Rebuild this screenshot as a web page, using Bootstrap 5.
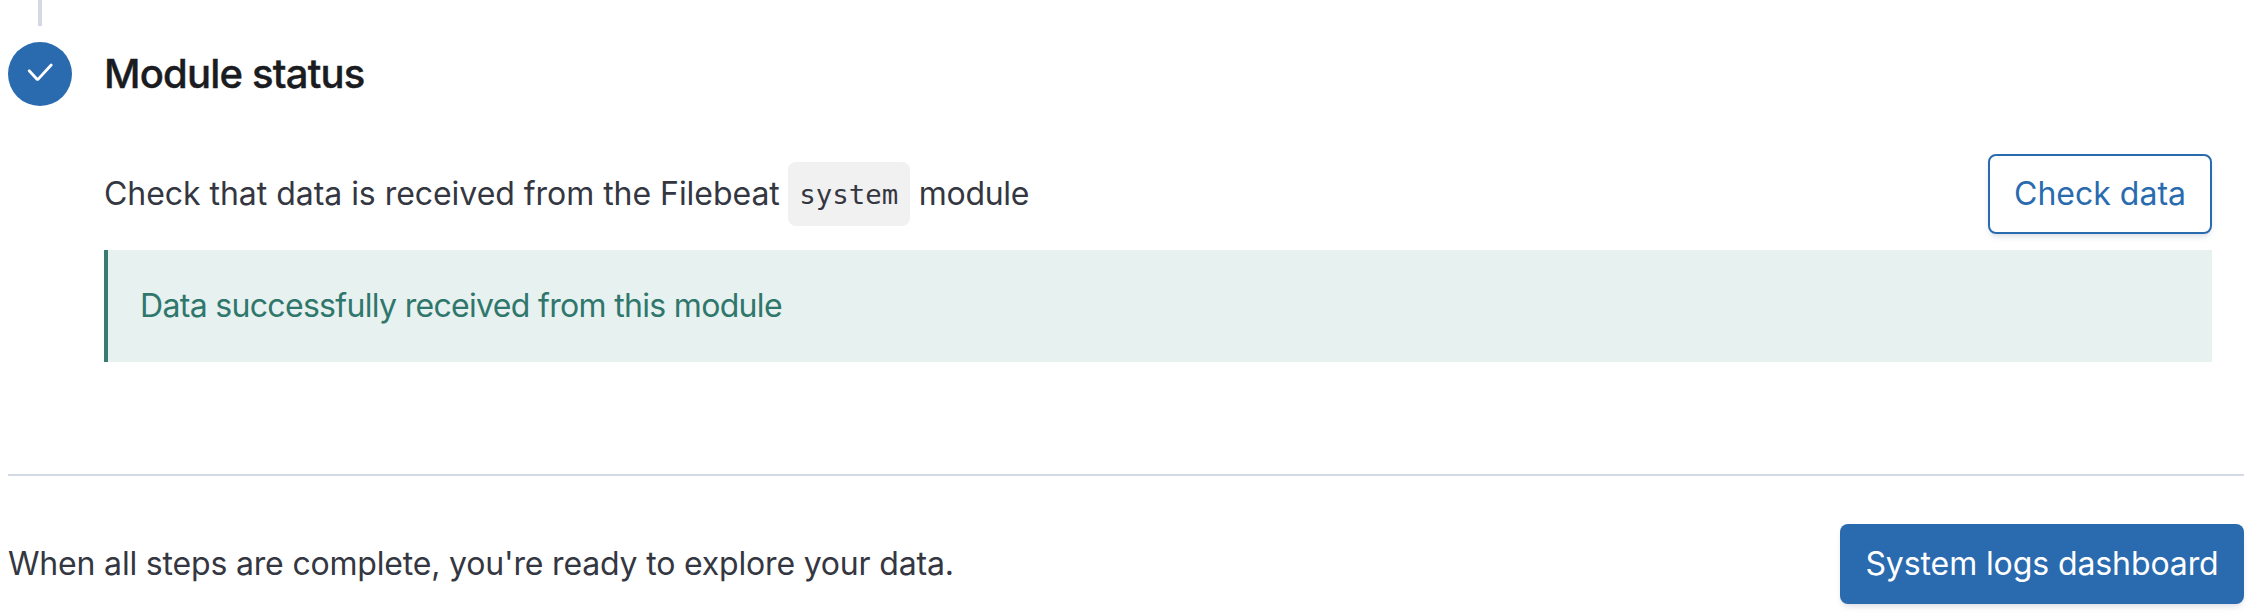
<!DOCTYPE html>
<html lang="en"><head><meta charset="utf-8"><title>Module status</title>
<link href="https://cdn.jsdelivr.net/npm/bootstrap@5.3.0/dist/css/bootstrap.min.css" rel="stylesheet">
<script src="https://cdn.jsdelivr.net/npm/bootstrap@5.3.0/dist/js/bootstrap.bundle.min.js"></script>
<style>
body{font-family:Inter,sans-serif;font-size:32px;line-height:48px;color:#343741;height:616px;overflow:hidden;background:#fff}
.page{padding:0 14px 0 8px}
.rail{width:64px}
.stem{width:4px;height:26px;background:#d3dae6}
.dot{width:64px;height:64px;margin-top:16px;background:#2a6baf}
.step-body{margin-left:32px;padding-right:32px}
h2{font-size:40px;line-height:64px;font-weight:500;color:#1a1c21;margin-top:42px;letter-spacing:-.8px;-webkit-text-stroke:.4px #1a1c21}
.check-row{height:80px;margin-top:48px}
.lead-in{letter-spacing:-.04px}
.tail{letter-spacing:-.3px}
code{font:27.4px/66px "DejaVu Sans Mono",monospace;height:64px;width:122px;text-align:center;color:#343741;background:#f1f1f1;border-radius:8px;margin:0 9px 0 8px}
.btn{font-size:32px;height:80px;line-height:48px;border-radius:8px;padding:0 24px;box-shadow:0 4px 6px -2px #98a2b366}
.btn-outline-primary{width:224px;border:2px solid #2a6baf;color:#2a6baf}
.btn-primary{width:404px;background:#2a6baf;border:0;letter-spacing:-.1px}
.callout{height:112px;margin-top:16px;border-left:4px solid #377b71;background:#e7f1ef;color:#2f776c;padding-left:32px;letter-spacing:-.68px}
.rule{height:2px;background:#d3dae6;margin-top:112px}
.footer-row{height:80px;margin-top:48px}
.closing{letter-spacing:-.18px}
</style></head><body>
<main class="page">
<section class="d-flex"><div class="rail d-flex flex-column align-items-center"><div class="stem"></div>
<div class="dot rounded-circle"><svg class="d-block" width="64" height="64" viewBox="0 0 64 64" fill="none" stroke="#fff" stroke-width="2.8" stroke-linecap="round" stroke-linejoin="round"><path d="M21.2 28.8l7.8 8.5q.6.3 1.2-.2L43.2 23"/></svg></div></div>
<div class="step-body flex-grow-1"><h2 class="mb-0">Module status</h2>
<div class="check-row d-flex align-items-center justify-content-between"><div class="d-flex align-items-center"><span class="lead-in">Check that data is received from the Filebeat</span><code>system</code><span class="tail">module</span></div><button class="btn btn-outline-primary">Check data</button></div>
<div class="callout d-flex align-items-center"><span>Data successfully received from this module</span></div></div></section>
<div class="rule"></div>
<footer class="footer-row d-flex align-items-center justify-content-between"><span class="closing">When all steps are complete, you're ready to explore your data.</span><a class="btn btn-primary d-flex align-items-center justify-content-center text-nowrap" href="#">System logs dashboard</a></footer>
</main></body></html>
